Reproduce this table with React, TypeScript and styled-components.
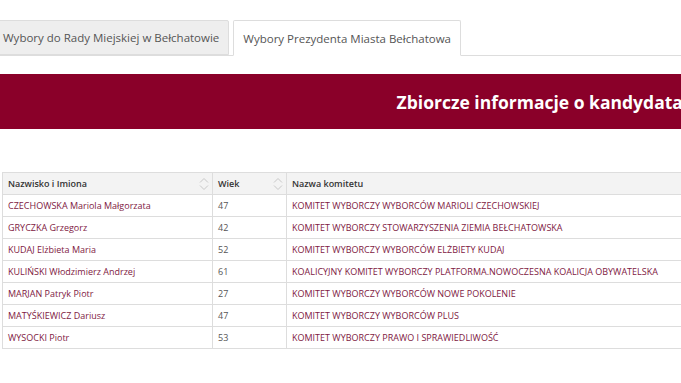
import React from "react";
import styled, { createGlobalStyle } from "styled-components";

const Global = createGlobalStyle`
  html, body { margin: 0; padding: 0; background: #fff; overflow: hidden; }
  body { font-family: "Open Sans", "Noto Sans", sans-serif; }
`;

const Page = styled.div`
  width: 1100px;
  padding-top: 20px;
`;

const TabList = styled.ul`
  display: flex;
  gap: 4px;
  list-style: none;
  margin: 0 0 0 -7px;
  padding: 0;
  border-bottom: 1px solid #ddd;
  height: 35px;
`;

const Tab = styled.li<{ $active?: boolean }>`
  box-sizing: border-box;
  height: ${(p) => (p.$active ? "36px" : "35px")};
  padding: 0 9px;
  display: flex;
  align-items: center;
  font-size: 11.5px;
  color: #555;
  background: ${(p) => (p.$active ? "#fff" : "#eee")};
  border: 1px solid #ddd;
  border-bottom: ${(p) => (p.$active ? "1px solid #fff" : "1px solid #ddd")};
  border-radius: 2px 2px 0 0;
  white-space: nowrap;
`;

const Banner = styled.div`
  margin-top: 18px;
  height: 55px;
  background: #8a0029;
  display: flex;
  align-items: center;
  justify-content: center;
`;

const Heading = styled.h2`
  margin: 0;
  font-size: 17.5px;
  font-weight: 700;
  color: #fff;
  white-space: nowrap;
`;

const Table = styled.table`
  margin: 43px 0 0 2px;
  border-collapse: collapse;
  width: 1090px;
  font-size: 9px;
`;

const Th = styled.th<{ $w?: number }>`
  box-sizing: border-box;
  height: 22px;
  ${(p) => (p.$w ? `width: ${p.$w}px;` : "")}
  padding: 0 5px;
  text-align: left;
  font-weight: 600;
  color: #333;
  background: #f3f3f3;
  border: 1px solid #ddd;
  position: relative;
`;

const Td = styled.td<{ $muted?: boolean }>`
  box-sizing: border-box;
  height: 22px;
  padding: 0 5px;
  color: ${(p) => (p.$muted ? "#555" : "#80193f")};
  border: 1px solid #ddd;
  white-space: nowrap;
`;

const SortIcon = styled.svg`
  position: absolute;
  right: 3px;
  top: 3px;
`;

const Sort = () => (
  <SortIcon width="10" height="16" viewBox="0 0 10 16" fill="none" stroke="#c8c8c8" strokeWidth="1">
    <path d="M1 6.5 L5 2.5 L9 6.5" />
    <path d="M1 9.5 L5 13.5 L9 9.5" />
  </SortIcon>
);

const rows = [
  ["CZECHOWSKA Mariola Małgorzata", "47", "KOMITET WYBORCZY WYBORCÓW MARIOLI CZECHOWSKIEJ"],
  ["GRYCZKA Grzegorz", "42", "KOMITET WYBORCZY STOWARZYSZENIA ZIEMIA BEŁCHATOWSKA"],
  ["KUDAJ Elżbieta Maria", "52", "KOMITET WYBORCZY WYBORCÓW ELŻBIETY KUDAJ"],
  ["KULIŃSKI Włodzimierz Andrzej", "61", "KOALICYJNY KOMITET WYBORCZY PLATFORMA.NOWOCZESNA KOALICJA OBYWATELSKA"],
  ["MARJAN Patryk Piotr", "27", "KOMITET WYBORCZY WYBORCÓW NOWE POKOLENIE"],
  ["MATYŚKIEWICZ Dariusz", "47", "KOMITET WYBORCZY WYBORCÓW PLUS"],
  ["WYSOCKI Piotr", "53", "KOMITET WYBORCZY PRAWO I SPRAWIEDLIWOŚĆ"],
];

export default function App() {
  return (
    <Page>
      <Global />
      <TabList>
        <Tab>Wybory do Rady Miejskiej w Bełchatowie</Tab>
        <Tab $active>Wybory Prezydenta Miasta Bełchatowa</Tab>
      </TabList>
      <Banner>
        <Heading>Zbiorcze informacje o kandydatach</Heading>
      </Banner>
      <Table>
        <thead>
          <tr>
            <Th $w={210}>
              Nazwisko i Imiona
              <Sort />
            </Th>
            <Th $w={74}>
              Wiek
              <Sort />
            </Th>
            <Th>Nazwa komitetu</Th>
          </tr>
        </thead>
        <tbody>
          {rows.map((r) => (
            <tr key={r[0]}>
              <Td>{r[0]}</Td>
              <Td $muted>{r[1]}</Td>
              <Td>{r[2]}</Td>
            </tr>
          ))}
        </tbody>
      </Table>
    </Page>
  );
}
